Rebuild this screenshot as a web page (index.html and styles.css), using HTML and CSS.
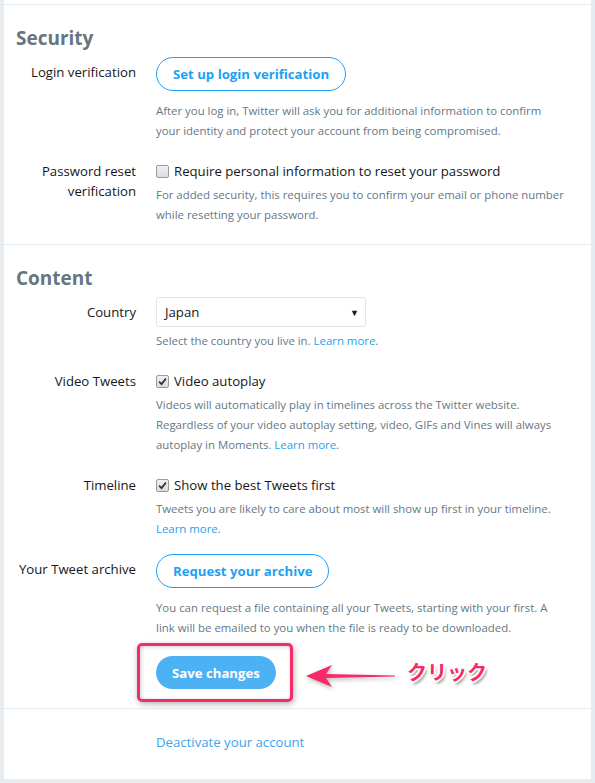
FILE: index.html
```html
<!DOCTYPE html>
<html lang="ja">

<head>
    <meta charset="UTF-8">
    <meta name="viewport" content="width=device-width, initial-scale=1.0">
    <title>Settings</title>
    <link rel="stylesheet" href="styles.css">
</head>

<body>
    <div class="settings-card">
        <section class="settings-section">
            <h2 class="section-title">Security</h2>
            <div class="setting-row">
                <div class="setting-label setting-label--button">Login verification</div>
                <div class="setting-field">
                    <button class="btn-outline" type="button">Set up login verification</button>
                    <p class="setting-note setting-note--wide">After you log in, Twitter will ask you for additional information to confirm your identity and protect your account from being compromised.</p>
                </div>
            </div>
            <div class="setting-row setting-row--check">
                <div class="setting-label">Password reset<br>verification</div>
                <div class="setting-field">
                    <label class="check-line">
                        <span class="check-box"></span>
                        Require personal information to reset your password
                    </label>
                    <p class="setting-note">For added security, this requires you to confirm your email or phone number while resetting your password.</p>
                </div>
            </div>
        </section>

        <section class="settings-section">
            <h2 class="section-title">Content</h2>
            <div class="setting-row">
                <div class="setting-label setting-label--select">Country</div>
                <div class="setting-field">
                    <div class="select-box">
                        <span>Japan</span>
                        <span class="select-arrow">&#9660;</span>
                    </div>
                    <p class="setting-note">Select the country you live in. <a href="#" class="link">Learn more</a>.</p>
                </div>
            </div>
            <div class="setting-row setting-row--check">
                <div class="setting-label">Video Tweets</div>
                <div class="setting-field">
                    <label class="check-line">
                        <span class="check-box is-checked">
                            <svg viewBox="0 0 10 10" width="9" height="9"><path d="M1.2 5.2 L3.9 7.9 L8.8 1.8" fill="none" stroke="#333" stroke-width="1.9"/></svg>
                        </span>
                        Video autoplay
                    </label>
                    <p class="setting-note">Videos will automatically play in timelines across the Twitter website. Regardless of your video autoplay setting, video, GIFs and Vines will always autoplay in Moments. <a href="#" class="link">Learn more</a>.</p>
                </div>
            </div>
            <div class="setting-row setting-row--check">
                <div class="setting-label">Timeline</div>
                <div class="setting-field">
                    <label class="check-line">
                        <span class="check-box is-checked">
                            <svg viewBox="0 0 10 10" width="9" height="9"><path d="M1.2 5.2 L3.9 7.9 L8.8 1.8" fill="none" stroke="#333" stroke-width="1.9"/></svg>
                        </span>
                        Show the best Tweets first
                    </label>
                    <p class="setting-note">Tweets you are likely to care about most will show up first in your timeline. <a href="#" class="link">Learn more</a>.</p>
                </div>
            </div>
            <div class="setting-row">
                <div class="setting-label setting-label--button">Your Tweet archive</div>
                <div class="setting-field">
                    <button class="btn-outline" type="button">Request your archive</button>
                    <p class="setting-note setting-note--wide">You can request a file containing all your Tweets, starting with your first. A link will be emailed to you when the file is ready to be downloaded.</p>
                </div>
            </div>
            <div class="save-row">
                <button class="btn-primary" type="button">Save changes</button>
                <!-- annotation overlay -->
                <span class="mark-box"></span>
                <svg class="mark-arrow" width="92" height="26" viewBox="0 0 92 26">
                    <polygon points="1,13 27,2 21,11 90,12.4 90,13.6 21,15 27,24" fill="#f72a68"/>
                </svg>
                <span class="mark-text">クリック</span>
            </div>
        </section>

        <section class="settings-section settings-section--footer">
            <a href="#" class="link deactivate-link">Deactivate your account</a>
        </section>
    </div>
</body>

</html>
```

FILE: styles.css
```css
*,
*::before,
*::after {
    box-sizing: border-box;
}

body {
    margin: 0;
    background-color: #e6ecf0;
    font-family: 'Segoe UI', 'Open Sans', sans-serif;
    color: #14171a;
}

p {
    margin: 0;
}

.settings-card {
    width: 587px;
    margin-left: 4px;
    padding-top: 4px;
    background-color: #fff;
}

.settings-section {
    border-top: 1px solid #e6ecf0;
    padding: 21px 0 19px;
}

.section-title {
    margin: 0 0 7px 12px;
    font-size: 19px;
    line-height: 24px;
    font-weight: 700;
    color: #66757f;
}

.setting-row {
    display: flex;
    margin-bottom: 15px;
}

.setting-row:last-child {
    margin-bottom: 0;
}

.setting-row--check {
    padding-top: 5px;
}

.setting-label {
    flex: 0 0 132px;
    margin-right: 20px;
    text-align: right;
    font-size: 13.2px;
    line-height: 20px;
}

.setting-label--button {
    padding-top: 5px;
}

.setting-label--select {
    padding-top: 5px;
}

.setting-field {
    flex: 1;
    padding-right: 24px;
}

.btn-outline {
    display: block;
    height: 34px;
    padding: 0 16px;
    border: 1px solid #1da1f2;
    border-radius: 17px;
    background-color: #fff;
    color: #1da1f2;
    font-family: inherit;
    font-size: 13.2px;
    font-weight: 700;
}

.setting-note {
    margin-top: 4px;
    font-size: 11.4px;
    line-height: 20px;
    color: #657786;
}

.setting-note--wide {
    margin-top: 10px;
}

.link {
    color: #1da1f2;
    text-decoration: none;
}

.check-line {
    display: flex;
    align-items: center;
    gap: 5px;
    font-size: 13.2px;
    line-height: 20px;
}

.check-box {
    display: inline-flex;
    align-items: center;
    justify-content: center;
    width: 13px;
    height: 13px;
    border: 1px solid #9a9a9a;
    border-radius: 2px;
    background: linear-gradient(#f0f0f0, #dcdcdc);
}

.select-box {
    display: flex;
    align-items: center;
    justify-content: space-between;
    width: 210px;
    height: 30px;
    padding: 0 6px 0 8px;
    border: 1px solid #e1e8ed;
    border-radius: 3px;
    font-size: 13.2px;
}

.select-arrow {
    font-size: 9px;
    color: #14171a;
}

.save-row {
    position: relative;
    margin: 18px 0 0 152px;
}

.btn-primary {
    display: block;
    height: 33px;
    padding: 0 16px;
    border: none;
    border-radius: 17px;
    background-color: #4db2f3;
    color: #fff;
    font-family: inherit;
    font-size: 13.2px;
    font-weight: 700;
}

.mark-box {
    position: absolute;
    left: -19px;
    top: -13px;
    width: 156px;
    height: 59px;
    border: 3px solid #f72a68;
    border-radius: 5px;
    box-shadow: 1px 2px 6px rgba(0, 0, 0, 0.3), inset 1px 1px 4px rgba(0, 0, 0, 0.2);
}

.mark-arrow {
    position: absolute;
    left: 149px;
    top: 7px;
    filter: drop-shadow(1px 2px 2px rgba(0, 0, 0, 0.3));
}

.mark-text {
    position: absolute;
    left: 251px;
    top: 3px;
    font-family: 'Noto Sans CJK JP', sans-serif;
    font-size: 20px;
    font-weight: 700;
    line-height: 26px;
    color: #f72a68;
    text-shadow: -1px -1px 0 #fff, 1px -1px 0 #fff, -1px 1px 0 #fff, 1px 1px 0 #fff,
        2px 0 0 #fff, -2px 0 0 #fff, 0 2px 0 #fff, 0 -2px 0 #fff,
        2px 3px 3px rgba(0, 0, 0, 0.45);
}

.settings-section--footer {
    padding: 21px 0 27px 152px;
}

.deactivate-link {
    font-size: 13.2px;
    line-height: 20px;
    color: #3aa5ee;
}
```
